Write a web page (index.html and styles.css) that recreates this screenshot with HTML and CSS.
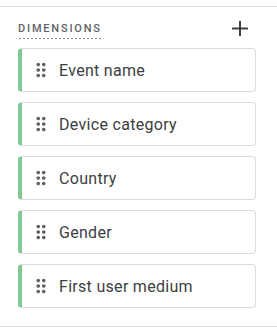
FILE: index.html
```html
<!DOCTYPE html>
<html lang="en">
<head>
    <meta charset="UTF-8">
    <meta name="viewport" content="width=device-width, initial-scale=1">
    <title>Dimensions</title>
    <link rel="stylesheet" href="styles.css">
</head>
<body>
    <div class="section">
        <div class="header">
            <span class="title">DIMENSIONS</span>
            <svg class="add" width="16" height="16" viewBox="0 0 16 16">
                <path d="M8 0V15M0 7.5H16" stroke="#3c4043" stroke-width="2" fill="none"/>
            </svg>
        </div>
        <div class="chip">
            <svg class="drag" width="22" height="22" viewBox="0 0 24 24"><path d="M11 18c0 1.1-.9 2-2 2s-2-.9-2-2 .9-2 2-2 2 .9 2 2zm-2-8c-1.1 0-2 .9-2 2s.9 2 2 2 2-.9 2-2-.9-2-2-2zm0-6c-1.1 0-2 .9-2 2s.9 2 2 2 2-.9 2-2-.9-2-2-2zm6 4c1.1 0 2-.9 2-2s-.9-2-2-2-2 .9-2 2 .9 2 2 2zm0 2c-1.1 0-2 .9-2 2s.9 2 2 2 2-.9 2-2-.9-2-2-2zm0 6c-1.1 0-2 .9-2 2s.9 2 2 2 2-.9 2-2-.9-2-2-2z"/></svg>
            <span>Event name</span>
        </div>
        <div class="chip">
            <svg class="drag" width="22" height="22" viewBox="0 0 24 24"><path d="M11 18c0 1.1-.9 2-2 2s-2-.9-2-2 .9-2 2-2 2 .9 2 2zm-2-8c-1.1 0-2 .9-2 2s.9 2 2 2 2-.9 2-2-.9-2-2-2zm0-6c-1.1 0-2 .9-2 2s.9 2 2 2 2-.9 2-2-.9-2-2-2zm6 4c1.1 0 2-.9 2-2s-.9-2-2-2-2 .9-2 2 .9 2 2 2zm0 2c-1.1 0-2 .9-2 2s.9 2 2 2 2-.9 2-2-.9-2-2-2zm0 6c-1.1 0-2 .9-2 2s.9 2 2 2 2-.9 2-2-.9-2-2-2z"/></svg>
            <span>Device category</span>
        </div>
        <div class="chip">
            <svg class="drag" width="22" height="22" viewBox="0 0 24 24"><path d="M11 18c0 1.1-.9 2-2 2s-2-.9-2-2 .9-2 2-2 2 .9 2 2zm-2-8c-1.1 0-2 .9-2 2s.9 2 2 2 2-.9 2-2-.9-2-2-2zm0-6c-1.1 0-2 .9-2 2s.9 2 2 2 2-.9 2-2-.9-2-2-2zm6 4c1.1 0 2-.9 2-2s-.9-2-2-2-2 .9-2 2 .9 2 2 2zm0 2c-1.1 0-2 .9-2 2s.9 2 2 2 2-.9 2-2-.9-2-2-2zm0 6c-1.1 0-2 .9-2 2s.9 2 2 2 2-.9 2-2-.9-2-2-2z"/></svg>
            <span>Country</span>
        </div>
        <div class="chip">
            <svg class="drag" width="22" height="22" viewBox="0 0 24 24"><path d="M11 18c0 1.1-.9 2-2 2s-2-.9-2-2 .9-2 2-2 2 .9 2 2zm-2-8c-1.1 0-2 .9-2 2s.9 2 2 2 2-.9 2-2-.9-2-2-2zm0-6c-1.1 0-2 .9-2 2s.9 2 2 2 2-.9 2-2-.9-2-2-2zm6 4c1.1 0 2-.9 2-2s-.9-2-2-2-2 .9-2 2 .9 2 2 2zm0 2c-1.1 0-2 .9-2 2s.9 2 2 2 2-.9 2-2-.9-2-2-2zm0 6c-1.1 0-2 .9-2 2s.9 2 2 2 2-.9 2-2-.9-2-2-2z"/></svg>
            <span>Gender</span>
        </div>
        <div class="chip">
            <svg class="drag" width="22" height="22" viewBox="0 0 24 24"><path d="M11 18c0 1.1-.9 2-2 2s-2-.9-2-2 .9-2 2-2 2 .9 2 2zm-2-8c-1.1 0-2 .9-2 2s.9 2 2 2 2-.9 2-2-.9-2-2-2zm0-6c-1.1 0-2 .9-2 2s.9 2 2 2 2-.9 2-2-.9-2-2-2zm6 4c1.1 0 2-.9 2-2s-.9-2-2-2-2 .9-2 2 .9 2 2 2zm0 2c-1.1 0-2 .9-2 2s.9 2 2 2 2-.9 2-2-.9-2-2-2zm0 6c-1.1 0-2 .9-2 2s.9 2 2 2 2-.9 2-2-.9-2-2-2z"/></svg>
            <span>First user medium</span>
        </div>
    </div>
</body>
</html>
```

FILE: styles.css
```css
body {
    margin: 0;
    background: #fff;
    font-family: Roboto, "Liberation Sans", sans-serif;
    color: #3c4043;
}
.section {
    margin-top: 6px;
    border-top: 1px solid #dadce0;
    border-bottom: 1px solid #dadce0;
    padding: 0 21px 18px 18px;
}
.header {
    display: flex;
    justify-content: space-between;
    align-items: flex-start;
    padding-top: 14px;
    margin-bottom: 8px;
}
.title {
    font-size: 11px;
    line-height: 16px;
    font-weight: 500;
    letter-spacing: 1.8px;
    color: #5f6368;
    padding-bottom: 2px;
    border-bottom: 1px solid transparent;
    background: repeating-linear-gradient(to right, #80868b 0 2px, transparent 2px 4px) bottom / calc(100% - 2px) 1px no-repeat;
}
.add {
    margin-right: 8px;
}
.chip {
    display: flex;
    align-items: center;
    gap: 7px;
    box-sizing: border-box;
    height: 44px;
    margin-bottom: 10px;
    padding-left: 8px;
    border: 1px solid #dadce0;
    border-left: 4px solid #81c995;
    border-radius: 4px;
    font-size: 16px;
    letter-spacing: 0.3px;
}
.chip:last-child {
    margin-bottom: 0;
}
.drag {
    fill: #5f6368;
}
```
